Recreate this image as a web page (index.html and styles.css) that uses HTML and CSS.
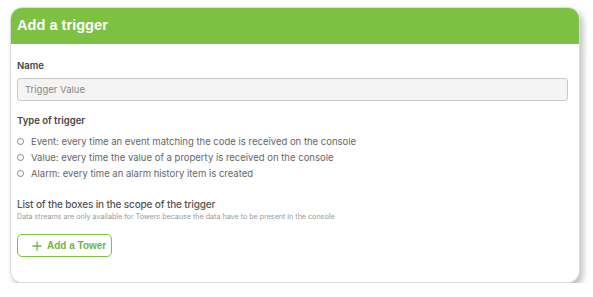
FILE: index.html
```html
<!DOCTYPE html>
<html>
<head>
<meta charset="utf-8">
<link rel="stylesheet" href="styles.css">
</head>
<body>
<div class="card">
  <div class="card-header">Add a trigger</div>
  <div class="card-body">
    <div class="field">
      <div class="label">Name</div>
      <div class="input">Trigger Value</div>
    </div>
    <div class="field type">
      <div class="label">Type of trigger</div>
      <div class="radios">
        <div class="radio"><span class="circle"></span>Event: every time an event matching the code is received on the console</div>
        <div class="radio"><span class="circle"></span>Value: every time the value of a property is received on the console</div>
        <div class="radio"><span class="circle"></span>Alarm: every time an alarm history item is created</div>
      </div>
    </div>
    <div class="field boxes">
      <div class="label big">List of the boxes in the scope of the trigger</div>
      <div class="hint">Data streams are only available for Towers because the data have to be present in the console</div>
      <button class="add-btn"><svg width="10" height="10" viewBox="0 0 10 10"><path d="M5 0.5v9M0.5 5h9" stroke="#6cb544" stroke-width="1.3" fill="none"/></svg><span>Add a Tower</span></button>
    </div>
  </div>
</div>
</body>
</html>
```
FILE: styles.css
```css
* { box-sizing: border-box; }
html, body { margin: 0; padding: 0; background: #fff; }
body { font-family: Inter, "Noto Sans", sans-serif; color: #444; }
.card {
  margin: 7px 0 0 10px;
  width: 570px;
  height: 276px;
  border: 1px solid #dcdcdc;
  border-radius: 12px;
  box-shadow: 3px 4px 6px rgba(0,0,0,0.25);
  overflow: hidden;
  background: #fff;
}
.card-header {
  height: 36px;
  background: #7cc142;
  color: #fff;
  font-family: "Liberation Sans", Arial, sans-serif;
  font-weight: bold;
  font-size: 14.6px;
  line-height: 35px;
  padding-left: 6px;
}
.card-body { padding: 15px 11px 0 6px; }
.label { font-size: 9.5px; font-weight: 600; line-height: 14px; color: #444; }
.label.big { font-size: 10px; font-weight: 500; letter-spacing: -0.15px; color: #555; }
.input {
  margin-top: 5px;
  height: 23px;
  border: 1px solid #c9c9c9;
  border-radius: 3px;
  background: #f4f4f4;
  font-size: 9.5px;
  color: #888;
  line-height: 21px;
  padding-left: 7px;
}
.type { margin-top: 13px; }
.radios { margin-top: 5px; }
.radio {
  display: flex;
  align-items: center;
  height: 16px;
  font-size: 9.5px;
  color: #666;
}
.circle {
  width: 7px; height: 7px;
  border: 1px solid #888;
  border-radius: 50%;
  margin-right: 7px;
  flex: none;
}
.boxes { margin-top: 16px; }
.hint { font-size: 7.15px; color: #999; line-height: 10px; margin-top: 1px; }
.add-btn {
  margin-top: 12px;
  display: flex;
  align-items: center;
  gap: 5px;
  width: 95px;
  height: 23px;
  border: 1px solid #7cc142;
  border-radius: 5px;
  background: #fff;
  color: #6cb544;
  font-family: "Liberation Sans", Arial, sans-serif;
  font-weight: bold;
  font-size: 10px;
  white-space: nowrap;
  padding: 0 0 0 14px;
}
```
